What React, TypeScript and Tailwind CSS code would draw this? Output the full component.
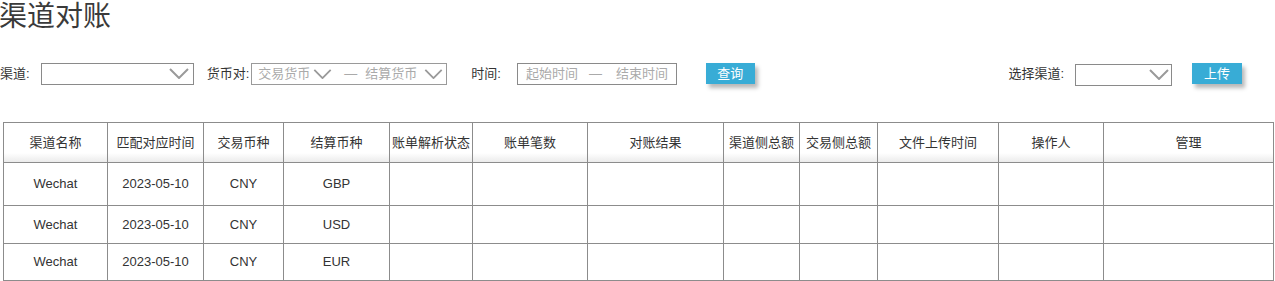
import React from 'react';

const font = "font-['Liberation_Sans','Noto_Sans_CJK_SC',sans-serif]";

const Chevron: React.FC<{ className?: string }> = ({ className = '' }) => (
  <svg viewBox="0 0 20 11" className={className} fill="none" stroke="#9a9a9a" strokeWidth="2">
    <polyline points="1,1 10,10 19,1" />
  </svg>
);

const BlueButton: React.FC<{ label: string; className?: string }> = ({ label, className = '' }) => (
  <button className={`h-[21px] w-[49px] bg-[#38acd6] text-white text-[13px] leading-[21px] shadow-[3px_4px_4px_rgba(0,0,0,0.28)] ${className}`}>
    {label}
  </button>
);

const headers = ['渠道名称', '匹配对应时间', '交易币种', '结算币种', '账单解析状态', '账单笔数', '对账结果', '渠道侧总额', '交易侧总额', '文件上传时间', '操作人', '管理'];
const widths = [104, 96, 80, 106, 83, 115, 136, 76, 78, 121, 105, 170];

const rows = [
  { name: 'Wechat', date: '2023-05-10', from: 'CNY', to: 'GBP', h: 'h-[43px]' },
  { name: 'Wechat', date: '2023-05-10', from: 'CNY', to: 'USD', h: 'h-[38px]' },
  { name: 'Wechat', date: '2023-05-10', from: 'CNY', to: 'EUR', h: 'h-[37px]' },
];

export default function App() {
  return (
    <div className={`w-[1275px] h-[281px] overflow-hidden bg-white text-[#333] ${font}`}>
      <h1 className="text-[28px] leading-[34px] font-normal text-[#3a3a3a] -ml-[1px]">渠道对账</h1>

      <div className="mt-[28px] flex items-center h-[23px] text-[13px]">
        <span>渠道:</span>
        <div className="ml-[11px] w-[153px] h-[22px] border border-[#8a8a8a] flex items-center justify-end pr-[4px]">
          <Chevron className="w-[20px] h-[11px]" />
        </div>

        <span className="ml-[13px]">货币对:</span>
        <div className="ml-[2px] w-[196px] h-[22px] border border-[#9a9a9a] flex items-center text-[#aaa] pl-[6px]">
          <span>交易货币</span>
          <Chevron className="ml-[3px] w-[19px] h-[10px]" />
          <span className="ml-[12px]">—</span>
          <span className="ml-[8px]">结算货币</span>
          <Chevron className="ml-[7px] w-[19px] h-[10px]" />
        </div>

        <span className="ml-[24px]">时间:</span>
        <div className="ml-[16px] w-[160px] h-[22px] border border-[#8a8a8a] flex items-center text-[#aaa] pl-[8px]">
          <span>起始时间</span>
          <span className="ml-[11px]">—</span>
          <span className="ml-[14px]">结束时间</span>
        </div>

        <BlueButton label="查询" className="ml-[29px]" />

        <span className="ml-auto">选择渠道:</span>
        <div className="ml-[11px] w-[97px] h-[22px] border border-[#8a8a8a] flex items-center justify-end pr-[2px] mt-[2px]">
          <Chevron className="w-[20px] h-[11px]" />
        </div>
        <BlueButton label="上传" className="ml-[20px] mr-[33px] w-[50px]" />
      </div>

      <table className="mt-[37px] ml-[3px] w-[1270px] table-fixed border-collapse text-[13px] text-center">
        <colgroup>
          {widths.map((w, i) => (
            <col key={i} style={{ width: w }} />
          ))}
        </colgroup>
        <thead>
          <tr className="h-[40px] bg-linear-to-b from-white via-white via-75% to-[#e9e9e9]">
            {headers.map((h) => (
              <th key={h} className="border border-[#8c8c8c] font-normal whitespace-nowrap p-0">{h}</th>
            ))}
          </tr>
        </thead>
        <tbody>
          {rows.map((r, i) => (
            <tr key={i} className={r.h}>
              <td className="border border-[#8c8c8c]">{r.name}</td>
              <td className="border border-[#8c8c8c]">{r.date}</td>
              <td className="border border-[#8c8c8c]">{r.from}</td>
              <td className="border border-[#8c8c8c]">{r.to}</td>
              {Array.from({ length: 8 }).map((_, j) => (
                <td key={j} className="border border-[#8c8c8c]"></td>
              ))}
            </tr>
          ))}
        </tbody>
      </table>
    </div>
  );
}
